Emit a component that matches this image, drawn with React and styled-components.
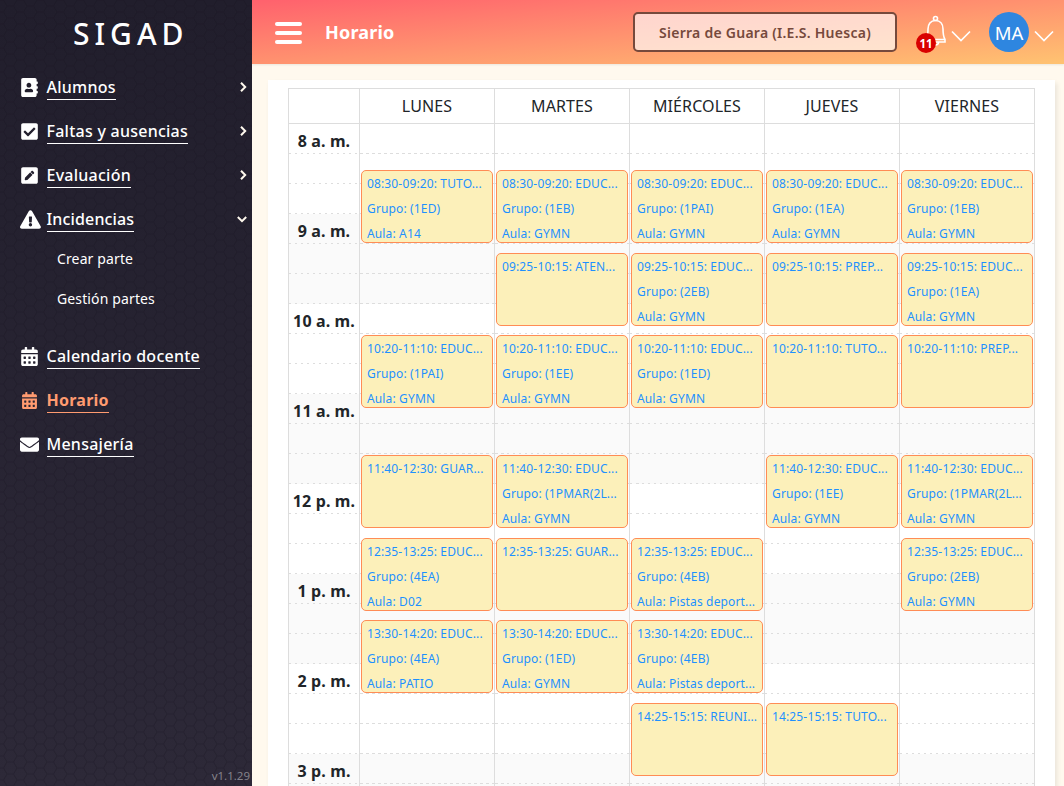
import React from "react";
import styled, { createGlobalStyle, css } from "styled-components";
import {
  FaAddressBook,
  FaCheckSquare,
  FaPenSquare,
  FaExclamationTriangle,
  FaCalendarAlt,
  FaEnvelope,
} from "react-icons/fa";

const Global = createGlobalStyle`
  *, *::before, *::after { box-sizing: border-box; }
  html, body { margin: 0; height: 100%; overflow: hidden; }
  body {
    font-family: "Noto Sans", "Open Sans", sans-serif;
    font-size: 16px;
    line-height: 24px;
    color: #212529;
    background: #fff9ee;
  }
`;

const Shell = styled.div`
  display: flex;
  height: 786px;
  width: 1064px;
  overflow: hidden;
`;

/* ---------- Sidebar ---------- */

const Sidebar = styled.aside`
  position: relative;
  display: flex;
  flex-direction: column;
  flex: 0 0 252px;
  background: linear-gradient(180deg, #211e2c 0%, #2d2938 100%);
  color: #fff;
`;

const Texture = styled.svg`
  position: absolute;
  inset: 0;
  width: 100%;
  height: 100%;
`;

const Brand = styled.div`
  position: relative;
  padding: 13px 0 0 73px;
  height: 65px;
  font-size: 30px;
  line-height: 42px;
  font-weight: 500;
  letter-spacing: 5px;
`;

const Nav = styled.nav`
  position: relative;
  flex: 1;
`;

const NavItem = styled.div`
  display: flex;
  align-items: center;
  height: 44px;
  padding: 0 5px 0 20px;
  color: ${(p) => (p.$active ? "#ff9b70" : "#fff")};
`;

const NavIcon = styled.span`
  display: flex;
  justify-content: ${(p) => (p.$wide ? "flex-start" : "center")};
  width: 19px;
  margin-right: 7.5px;
  font-size: ${(p) => p.$size || 19}px;

  svg {
    flex: none;
    width: ${(p) => (p.$wide ? "1.1em" : "1em")};
  }
`;

const NavLabel = styled.span`
  font-weight: ${(p) => (p.$active ? 700 : 500)};
  letter-spacing: ${(p) => p.$tracking || 0.25}px;
  border-bottom: 1px solid currentColor;
  line-height: 24px;
`;

const Caret = styled.svg`
  width: 10px;
  height: 10px;
  margin-left: auto;
  margin-right: ${(p) => (p.$open ? 0 : -0.5)}px;
  transform: ${(p) => (p.$open ? "rotate(90deg)" : "none")};
  fill: none;
  stroke: #fff9ee;
  stroke-width: 2;
`;

const SubMenu = styled.div`
  padding-bottom: 15px;
  margin-top: -2px;
`;

const SubItem = styled.div`
  height: 40px;
  padding-left: 57px;
  font-size: 14px;
  line-height: 40px;
  letter-spacing: 0.13px;
`;

const Version = styled.div`
  position: relative;
  padding: 0 2px 1px 0;
  text-align: right;
  font-size: 11.5px;
  line-height: 18px;
  color: #84828a;
`;

/* ---------- Header ---------- */

const Main = styled.div`
  flex: 1;
  min-width: 0;
  display: flex;
  flex-direction: column;
`;

const TopBar = styled.header`
  display: flex;
  align-items: center;
  flex: 0 0 64px;
  padding: 0 10px 0 23px;
  background: linear-gradient(to bottom right, #ff616d, #ffc371);
  box-shadow: 0 1px 2px rgba(0, 0, 0, 0.08);
`;

const Burger = styled.div`
  display: flex;
  flex-direction: column;
  gap: 5px;
  width: 27px;
  margin: 1px 23px 0 0;
`;

const BurgerBar = styled.span`
  height: 4px;
  border-radius: 2px;
  background: #fff;
`;

const PageTitle = styled.h1`
  flex: 1;
  margin: 0;
  font-size: 18px;
  font-weight: 700;
  letter-spacing: 0.2px;
  color: #fff;
`;

const SchoolButton = styled.button`
  width: 264px;
  height: 40px;
  margin-right: 19px;
  padding: 0;
  border: 2px solid #76493c;
  border-radius: 5px;
  background: rgba(255, 255, 255, 0.66);
  color: #76493c;
  font: 600 14px "Noto Sans", sans-serif;
  letter-spacing: 0.26px;
`;

const BellWrap = styled.div`
  position: relative;
  width: 35px;
  height: 40px;
`;

const BellIcon = styled.svg`
  position: absolute;
  left: 9px;
  top: 3px;
  width: 22px;
  height: 32px;
  fill: none;
  stroke: #fff;
  stroke-width: 1.6;
`;

const Badge = styled.span`
  position: absolute;
  left: 0;
  top: 21px;
  width: 20px;
  height: 20px;
  border-radius: 50%;
  background: #d90000;
  color: #fff;
  font-size: 11.5px;
  font-weight: 700;
  line-height: 21px;
  text-align: center;
`;

const Chevron = styled.svg`
  width: 20px;
  height: 12px;
  margin-top: 7px;
  fill: none;
  stroke: #fff;
  stroke-width: 1.7;
`;

const Avatar = styled.div`
  width: 40px;
  height: 40px;
  margin: 0 5px 0 18px;
  border-radius: 50%;
  background: #2e86e0;
  color: #fff;
  font-size: 18.500px;
  line-height: 41px;
  text-align: center;
`;

/* ---------- Timetable ---------- */

const Card = styled.section`
  flex: 1;
  min-height: 0;
  margin: 16px 9px 0 16px;
  padding: 8px 20px 0;
  overflow: hidden;
  background: #fff;
  box-shadow: 2px 3px 5px rgba(0, 0, 0, 0.09);
`;

const line = "1px solid #ddd";

const HeadRow = styled.div`
  display: grid;
  grid-template-columns: 72px repeat(5, 135px);
  height: 36px;
  border-top: ${line};
  border-bottom: ${line};
`;

const HeadCell = styled.div`
  border-right: ${line};
  text-align: center;
  line-height: 34px;
  letter-spacing: 0.1px;
  ${(p) => p.$first && css`border-left: ${line};`}
`;

const Body = styled.div`
  display: grid;
  grid-template-columns: 72px repeat(5, 135px);
`;

const Column = styled.div`
  display: grid;
  grid-template-rows: repeat(8, 90px);
  position: relative;
  border-right: ${line};
  ${(p) => p.$axis && css`border-left: ${line};`}
`;

const HourBlock = styled.div`
  display: grid;
  grid-template-rows: repeat(3, 30px);
  background: ${(p) => (p.$shade ? "#fafafa" : "#fff")};
`;

const Slot = styled.div`
  background: repeating-linear-gradient(90deg, #ddd 0 2.500px, transparent 2.500px 6px) left bottom / 100% 1px no-repeat;
  padding-top: 5px;
  text-align: center;
  font-weight: 700;
  letter-spacing: 0.12px;
  white-space: nowrap;
`;

const Lesson = styled.article`
  position: absolute;
  left: 1px;
  right: 1px;
  height: 73px;
  padding: 1px 5px 0;
  overflow: hidden;
  border: 1px solid #ff8c55;
  border-radius: 5px;
  background: #fcf0ba;
  color: #1e90ff;
`;

const LessonLine = styled.p`
  margin: 0;
  height: 25px;
  font-size: 12px;
  line-height: 24px;
  letter-spacing: 0.14px;
  overflow: hidden;
  white-space: nowrap;
`;

const hours = ["8 a. m.", "9 a. m.", "10 a. m.", "11 a. m.", "12 p. m.", "1 p. m.", "2 p. m.", "3 p. m."];

const EF = "EDUC...";
const week = [
  {
    day: "LUNES",
    lessons: [
      ["08:30-09:20", "TUTO...", "(1ED)", "A14"],
      ["10:20-11:10", EF, "(1PAI)", "GYMN"],
      ["11:40-12:30", "GUAR..."],
      ["12:35-13:25", EF, "(4EA)", "D02"],
      ["13:30-14:20", EF, "(4EA)", "PATIO"],
    ],
  },
  {
    day: "MARTES",
    lessons: [
      ["08:30-09:20", EF, "(1EB)", "GYMN"],
      ["09:25-10:15", "ATEN..."],
      ["10:20-11:10", EF, "(1EE)", "GYMN"],
      ["11:40-12:30", EF, "(1PMAR(2L...", "GYMN"],
      ["12:35-13:25", "GUAR..."],
      ["13:30-14:20", EF, "(1ED)", "GYMN"],
    ],
  },
  {
    day: "MIÉRCOLES",
    lessons: [
      ["08:30-09:20", EF, "(1PAI)", "GYMN"],
      ["09:25-10:15", EF, "(2EB)", "GYMN"],
      ["10:20-11:10", EF, "(1ED)", "GYMN"],
      ["12:35-13:25", EF, "(4EB)", "Pistas deport..."],
      ["13:30-14:20", EF, "(4EB)", "Pistas deport..."],
      ["14:25-15:15", "REUNI..."],
    ],
  },
  {
    day: "JUEVES",
    lessons: [
      ["08:30-09:20", EF, "(1EA)", "GYMN"],
      ["09:25-10:15", "PREP..."],
      ["10:20-11:10", "TUTO..."],
      ["11:40-12:30", EF, "(1EE)", "GYMN"],
      ["14:25-15:15", "TUTO..."],
    ],
  },
  {
    day: "VIERNES",
    lessons: [
      ["08:30-09:20", EF, "(1EB)", "GYMN"],
      ["09:25-10:15", EF, "(1EA)", "GYMN"],
      ["10:20-11:10", "PREP..."],
      ["11:40-12:30", EF, "(1PMAR(2L...", "GYMN"],
      ["12:35-13:25", EF, "(2EB)", "GYMN"],
    ],
  },
];

// One minute takes 1.5px, counted from 8:00.
const topOf = (range) => {
  const [h, m] = range.split("-")[0].split(":").map(Number);
  return Math.round(((h - 8) * 60 + m) * 1.5) + 1;
};

const menu = [
  { label: "Alumnos", icon: FaAddressBook, caret: true },
  { label: "Faltas y ausencias", icon: FaCheckSquare, caret: true },
  { label: "Evaluación", icon: FaPenSquare, caret: true },
  {
    label: "Incidencias",
    icon: FaExclamationTriangle,
    caret: true,
    wide: true,
    tracking: 0.15,
    children: ["Crear parte", "Gestión partes"],
  },
  { label: "Calendario docente", icon: FaCalendarAlt },
  { label: "Horario", icon: FaCalendarAlt, active: true, size: 17 },
  { label: "Mensajería", icon: FaEnvelope },
];

function Hexagons() {
  return (
    <Texture aria-hidden="true">
      <defs>
        <pattern id="hex" width="20" height="24" patternUnits="userSpaceOnUse">
          <path
            d="M0 12h3.500L7 6h6.500L17 12h3M3.500 12 7 18h6.500L17 12M7 6 3.500 0M13.500 6 17 0M7 18 3.500 24M13.500 18 17 24M0 0h3.500M17 0h3M0 24h3.500M17 24h3"
            fill="none"
            stroke="#13101d"
            strokeOpacity="0.25"
            strokeWidth="1.2"
          />
        </pattern>
      </defs>
      <rect width="100%" height="100%" fill="url(#hex)" />
    </Texture>
  );
}

function MenuEntry({ item }) {
  const Icon = item.icon;
  return (
    <>
      <NavItem $active={item.active}>
        <NavIcon $size={item.size} $wide={item.wide}>
          <Icon />
        </NavIcon>
        <NavLabel $active={item.active} $tracking={item.tracking}>
          {item.label}
        </NavLabel>
        {item.caret && (
          <Caret viewBox="0 0 10 10" $open={!!item.children}>
            <path d="M3 .8 7.200 5 3 9.200" />
          </Caret>
        )}
      </NavItem>
      {item.children && (
        <SubMenu>
          {item.children.map((c) => (
            <SubItem key={c}>{c}</SubItem>
          ))}
        </SubMenu>
      )}
    </>
  );
}

function DownArrow() {
  return (
    <Chevron viewBox="0 0 20 12">
      <path d="M1 1.500 10 10.500 19 1.500" />
    </Chevron>
  );
}

export default function App() {
  return (
    <Shell>
      <Global />
      <Sidebar>
        <Hexagons />
        <Brand>SIGAD</Brand>
        <Nav>
          {menu.map((item) => (
            <MenuEntry key={item.label} item={item} />
          ))}
        </Nav>
        <Version>v1.1.29</Version>
      </Sidebar>
      <Main>
        <TopBar>
          <Burger>
            <BurgerBar />
            <BurgerBar />
            <BurgerBar />
          </Burger>
          <PageTitle>Horario</PageTitle>
          <SchoolButton>Sierra de Guara (I.E.S. Huesca)</SchoolButton>
          <BellWrap>
            <BellIcon viewBox="0 0 22 32">
              <circle cx="10.500" cy="3.500" r="2" />
              <path d="M10.500 5.500c-5 0-7.500 4-7.500 8.500 0 5-.5 8-2 10.500v2.500h19v-2.500c-1.500-2.500-2-5.500-2-10.500 0-4.500-2.500-8.500-7.500-8.500ZM1 24.500h19M7.500 27c0 4 6 4 6 0" />
            </BellIcon>
            <Badge>11</Badge>
          </BellWrap>
          <DownArrow />
          <Avatar>MA</Avatar>
          <DownArrow />
        </TopBar>
        <Card>
          <HeadRow>
            <HeadCell $first />
            {week.map((d) => (
              <HeadCell key={d.day}>{d.day}</HeadCell>
            ))}
          </HeadRow>
          <Body>
            <Column $axis>
              {hours.map((h, i) => (
                <HourBlock key={h} $shade={i % 2 === 1}>
                  <Slot>{h}</Slot>
                  <Slot />
                  <Slot />
                </HourBlock>
              ))}
            </Column>
            {week.map((d) => (
              <Column key={d.day}>
                {hours.map((h, i) => (
                  <HourBlock key={h} $shade={i % 2 === 1}>
                    <Slot />
                    <Slot />
                    <Slot />
                  </HourBlock>
                ))}
                {d.lessons.map(([time, subject, group, room]) => (
                  <Lesson key={time} style={{ top: topOf(time) }}>
                    <LessonLine>{`${time}: ${subject}`}</LessonLine>
                    {group && <LessonLine>Grupo: {group}</LessonLine>}
                    {room && <LessonLine>Aula: {room}</LessonLine>}
                  </Lesson>
                ))}
              </Column>
            ))}
          </Body>
        </Card>
      </Main>
    </Shell>
  );
}
